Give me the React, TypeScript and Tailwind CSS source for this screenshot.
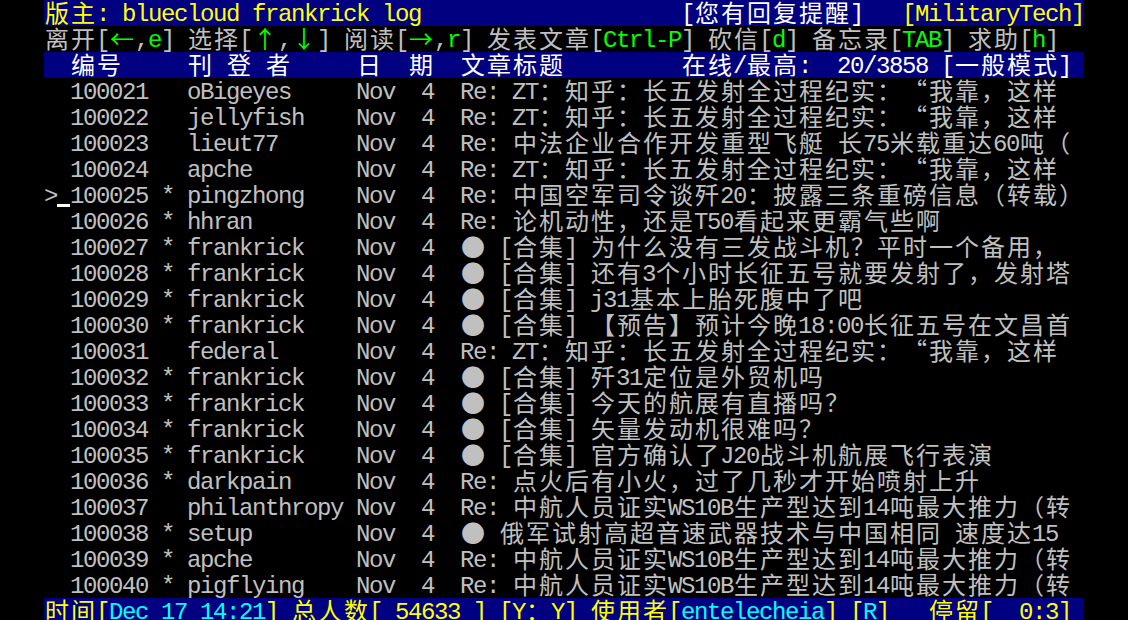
import React from 'react';

type Seg = [string, string];

const G = 'text-[#c0c0c0]';
const Y = 'text-[#ffff00]';
const C = 'text-[#00ffff]';
const W = 'text-white';
const N = 'text-[#00ff00]';

// terminal cells: half-width 13px, full-width 26px
const isWide = (ch: string) => {
  const cp = ch.codePointAt(0) || 0;
  return (
    (cp >= 0x2190 && cp <= 0x21ff) ||
    (cp >= 0x25a0 && cp <= 0x25ff) ||
    cp === 0x201c ||
    cp === 0x201d ||
    cp >= 0x2e80
  );
};

// split into runs of narrow chars; wide chars each get their own cell
const runs = (text: string) => {
  const out: { wide: boolean; s: string }[] = [];
  let buf = '';
  for (const ch of Array.from(text)) {
    if (isWide(ch)) {
      if (buf) out.push({ wide: false, s: buf });
      buf = '';
      out.push({ wide: true, s: ch });
    } else buf += ch;
  }
  if (buf) out.push({ wide: false, s: buf });
  return out;
};

const Cells: React.FC<{ text: string; color: string }> = ({ text, color }) => (
  <>
    {runs(text).map((r, i) =>
      r.wide ? (
        <span
          key={i}
          className={`${color} block h-[26px] w-[26px] shrink-0 -translate-y-[1.5px] text-center text-[24px] leading-[26px] font-['Noto_Sans_CJK_SC',sans-serif]`}
        >
          {r.s}
        </span>
      ) : (
        <span
          key={i}
          className={`${color} block h-[26px] shrink-0 translate-y-[1.5px] whitespace-pre text-[24px] leading-[26px] tracking-[-1.4px] font-['Liberation_Mono',monospace]`}
          style={{ width: r.s.length * 13 }}
        >
          {r.s}
        </span>
      )
    )}
  </>
);

const Row: React.FC<{ segs: Seg[]; bar?: boolean; cursor?: boolean }> = ({ segs, bar, cursor }) => (
  <div className={`flex h-[26px] w-[1040px] overflow-hidden ${bar ? 'bg-[#000080]' : ''}`}>
    {cursor && (
      <>
        <Cells text=">" color={G} />
        <span className="block h-[26px] w-[13px] shrink-0">
          <span className="mt-[22px] block h-[3px] w-[13px] bg-white" />
        </span>
      </>
    )}
    {segs.map(([t, c], i) => (
      <Cells key={i} text={t} color={c} />
    ))}
  </div>
);

const ZHIHU = 'Re: ZT：知乎：长五发射全过程纪实：“我靠，这样';
const WS10 = 'Re: 中航人员证实WS10B生产型达到14吨最大推力（转';

const posts: [string, boolean, string, string][] = [
  ['100021', false, 'oBigeyes', ZHIHU],
  ['100022', false, 'jellyfish', ZHIHU],
  ['100023', false, 'lieut77', 'Re: 中法企业合作开发重型飞艇 长75米载重达60吨（'],
  ['100024', false, 'apche', ZHIHU],
  ['100025', true, 'pingzhong', 'Re: 中国空军司令谈歼20：披露三条重磅信息（转载）'],
  ['100026', true, 'hhran', 'Re: 论机动性，还是T50看起来更霸气些啊'],
  ['100027', true, 'frankrick', '● [合集] 为什么没有三发战斗机？平时一个备用，'],
  ['100028', true, 'frankrick', '● [合集] 还有3个小时长征五号就要发射了，发射塔'],
  ['100029', true, 'frankrick', '● [合集] j31基本上胎死腹中了吧'],
  ['100030', true, 'frankrick', '● [合集] 【预告】预计今晚18:00长征五号在文昌首'],
  ['100031', false, 'federal', ZHIHU],
  ['100032', true, 'frankrick', '● [合集] 歼31定位是外贸机吗'],
  ['100033', true, 'frankrick', '● [合集] 今天的航展有直播吗？'],
  ['100034', true, 'frankrick', '● [合集] 矢量发动机很难吗？'],
  ['100035', true, 'frankrick', '● [合集] 官方确认了J20战斗机航展飞行表演'],
  ['100036', true, 'darkpain', 'Re: 点火后有小火，过了几秒才开始喷射上升'],
  ['100037', false, 'philanthropy', WS10],
  ['100038', true, 'setup', '● 俄军试射高超音速武器技术与中国相同 速度达15'],
  ['100039', true, 'apche', WS10],
  ['100040', true, 'pigflying', WS10],
];

const CURRENT = '100025';

export default function App() {
  return (
    <div className="h-[620px] w-[1128px] overflow-hidden bg-black pl-[44px]">
      <Row
        bar
        segs={[
          ['版主: bluecloud frankrick log', Y],
          ['                    ', Y],
          ['[您有回复提醒]', W],
          ['   ', Y],
          ['[MilitaryTech]', Y],
        ]}
      />
      <Row
        segs={[
          ['离开[', G], ['←', N], [',', G], ['e', N], ['] 选择[', G],
          ['↑', N], [',', G], ['↓', N], ['] 阅读[', G],
          ['→', N], [',', G], ['r', N], ['] 发表文章[', G],
          ['Ctrl-P', N], ['] 砍信[', G], ['d', N], ['] 备忘录[', G],
          ['TAB', N], ['] 求助[', G], ['h', N], [']', G],
        ]}
      />
      <Row
        bar
        segs={[['  编号     刊 登 者     日  期  文章标题         在线/最高:  20/3858 [一般模式]', W]]}
      />
      {posts.map(([num, star, user, title]) => {
        const cur = num === CURRENT;
        return (
          <Row
            key={num}
            cursor={cur}
            segs={[
              [
                (cur ? '' : '  ') + num + ' ' + (star ? '*' : ' ') + ' ' + user.padEnd(13) + 'Nov  4  ' + title,
                G,
              ],
            ]}
          />
        );
      })}
      <Row
        bar
        segs={[
          ['时间[', Y], ['Dec 17 14:21', C], ['] 总人数[ 54633 ] [Y：Y] 使用者[', Y],
          ['entelecheia', C], ['] [', Y], ['R', C], [']   停留[  0:3]', Y],
        ]}
      />
    </div>
  );
}
